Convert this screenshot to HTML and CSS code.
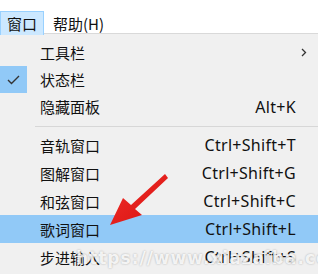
FILE: index.html
```html
<!DOCTYPE html>
<html lang="zh-CN">
<head>
    <meta charset="UTF-8">
    <title>窗口菜单</title>
    <link rel="stylesheet" href="styles.css">
</head>
<body>

    <div class="window">
        <div class="menubar">
            <span class="menubar-item active">窗口</span>
            <span class="menubar-item">帮助(H)</span>
        </div>

        <div class="menu">
            <div class="menu-group">
                <div class="menu-item">
                    <span class="check"></span>
                    <span class="label">工具栏</span>
                    <svg class="submenu" width="6" height="9" viewBox="0 0 6 9"><path d="M1 1 L4.5 4.5 L1 8" fill="none" stroke="#333" stroke-width="1.3"/></svg>
                </div>
                <div class="menu-item">
                    <span class="check checked">
                        <svg width="13" height="10" viewBox="0 0 13 10"><path d="M1 5 L4.5 8.5 L12 1" fill="none" stroke="#333" stroke-width="1.4"/></svg>
                    </span>
                    <span class="label">状态栏</span>
                </div>
                <div class="menu-item">
                    <span class="check"></span>
                    <span class="label">隐藏面板</span>
                    <span class="shortcut">Alt+K</span>
                </div>
            </div>

            <div class="separator"></div>

            <div class="menu-group tall">
                <div class="menu-item">
                    <span class="check"></span>
                    <span class="label">音轨窗口</span>
                    <span class="shortcut">Ctrl+Shift+T</span>
                </div>
                <div class="menu-item">
                    <span class="check"></span>
                    <span class="label">图解窗口</span>
                    <span class="shortcut">Ctrl+Shift+G</span>
                </div>
                <div class="menu-item">
                    <span class="check"></span>
                    <span class="label">和弦窗口</span>
                    <span class="shortcut">Ctrl+Shift+C</span>
                </div>
                <div class="menu-item selected">
                    <span class="check"></span>
                    <span class="label">歌词窗口</span>
                    <span class="shortcut">Ctrl+Shift+L</span>
                </div>
                <div class="menu-item">
                    <span class="check"></span>
                    <span class="label">步进输入</span>
                    <span class="shortcut">Ctrl+Shift+S</span>
                </div>
            </div>
        </div>

        <!-- annotation arrow -->
        <svg class="arrow" width="318" height="274" viewBox="0 0 318 274">
            <defs>
                <linearGradient id="red" x1="0" y1="0" x2="1" y2="1">
                    <stop offset="0" stop-color="#f0302a"/>
                    <stop offset="1" stop-color="#d8100f"/>
                </linearGradient>
            </defs>
            <polygon points="110,225 123,198 131,205 165,174 168,178 135,209 142,215" fill="url(#red)"/>
        </svg>

        <div class="watermark">https://www.xiazaiba.cc</div>
    </div>

</body>
</html>
```

FILE: styles.css
```css
body {
    margin: 0;
    background-color: #f0f0f0;
    font-family: "Noto Sans CJK SC", "Noto Sans", sans-serif;
    color: #111;
}
.window {
    position: relative;
    width: 318px;
    height: 274px;
    overflow: hidden;
}
.menubar {
    display: flex;
    gap: 2px;
    height: 34px;
    padding-top: 11px;
    box-sizing: border-box;
    background-color: #fff;
    border-bottom: 1px solid #d9d9d9;
}
.menubar-item {
    display: flex;
    align-items: center;
    height: 23px;
    padding: 0 6px;
    border: 1px solid transparent;
    border-bottom: none;
    font-size: 15px;
}
.menubar-item.active {
    background-color: #cce8ff;
    border-color: #99d1ff;
}
.menu {
    padding-top: 5px;
}
.menu-item {
    display: flex;
    align-items: center;
    height: 27px;
    font-size: 15px;
}
.tall .menu-item {
    height: 28px;
}
.menu-item.selected {
    background-color: #91c9f7;
}
.check {
    display: flex;
    align-items: center;
    justify-content: center;
    width: 27px;
    height: 100%;
}
.check.checked {
    background-color: #91c9f7;
}
.label {
    margin-left: 13px;
}
.shortcut {
    margin-left: auto;
    padding-right: 22px;
    font-family: "Noto Sans", sans-serif;
    font-size: 16px;
    letter-spacing: 0.3px;
}
.submenu {
    margin-left: auto;
    margin-right: 11px;
}
.separator {
    height: 1px;
    margin: 6px 0 4px 35px;
    background-color: #d7d7d7;
}
.arrow {
    position: absolute;
    left: 0;
    top: 0;
}
.watermark {
    position: absolute;
    left: 76px;
    top: 250px;
    font-family: "DejaVu Sans", sans-serif;
    font-weight: bold;
    font-size: 17px;
    line-height: 1;
    letter-spacing: 1px;
    color: rgba(255, 255, 255, 0.85);
    text-shadow: 0 0 2px rgba(0, 0, 0, 0.3);
}
```
